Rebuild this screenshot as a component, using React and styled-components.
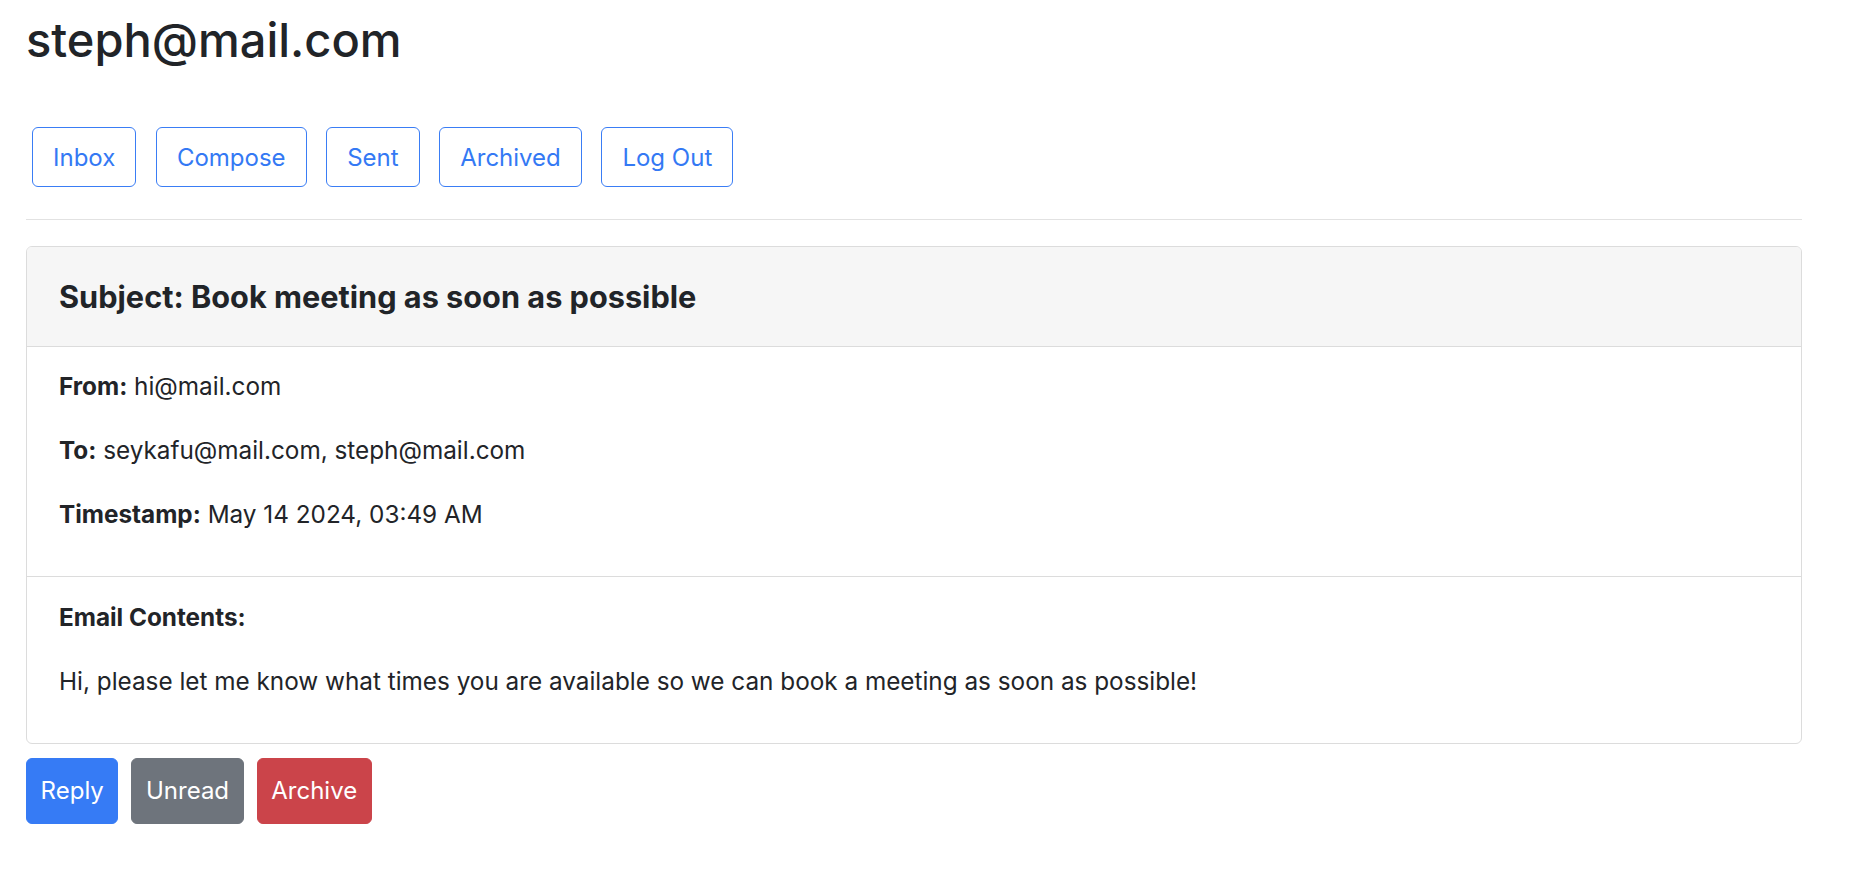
import React from "react";
import styled, { createGlobalStyle } from "styled-components";

const GlobalStyle = createGlobalStyle`
  html, body {
    margin: 0;
    padding: 0;
    background: #ffffff;
  }
  body {
    font-family: Inter, "Liberation Sans", Arial, sans-serif;
    color: #222428;
    -webkit-font-smoothing: antialiased;
  }
  * { box-sizing: border-box; }
`;

const Page = styled.div`
  width: 1802px;
  padding: 11px 0 40px 26px;
  display: flex;
  flex-direction: column;
`;

const Title = styled.h2`
  margin: 0;
  font-size: 47px;
  font-weight: 500;
  line-height: 57.6px;
  color: #212428;
`;

const Nav = styled.nav`
  display: flex;
  gap: 19.6px;
  padding-left: 6px;
  margin-top: 58.7px;
`;

const NavButton = styled.button`
  font-family: inherit;
  font-size: 24px;
  line-height: 36px;
  padding: 12px 20px 9.4px;
  border: 1px solid #3a7df5;
  border-radius: 6px;
  background: #ffffff;
  color: #3479f4;
  cursor: pointer;
`;

const Rule = styled.hr`
  margin: 32.3px 0 0;
  border: 0;
  border-top: 1px solid #e2e2e2;
  height: 0;
`;

const Card = styled.section`
  margin-top: 26px;
  border: 1px solid #dcdcdc;
  border-radius: 6px;
  overflow: hidden;
  background: #fff;
`;

const CardHeader = styled.header`
  background: #f6f6f6;
  border-bottom: 1px solid #dcdcdc;
  padding: 32.4px 32px 30.6px;
`;

const Subject = styled.h5`
  margin: 0;
  font-size: 30.7px;
  font-weight: 700;
  line-height: 36px;
  color: #212428;
`;

const CardSection = styled.div`
  padding: 21.3px 32px 16px;
  border-top: ${(p) => (p.$divided ? "1px solid #dcdcdc" : "0")};
`;

const Line = styled.p`
  margin: 0 0 28px;
  font-size: 24.3px;
  line-height: 36px;
`;

const Label = styled.strong`
  font-weight: 700;
`;

const Actions = styled.div`
  display: flex;
  gap: 13px;
  margin-top: 14px;
`;

const tones = {
  primary: "#367bf5",
  secondary: "#6e747c",
  danger: "#cb444a",
};

const ActionButton = styled.button`
  font-family: inherit;
  font-size: 24px;
  line-height: 36px;
  padding: 14px 13.6px;
  border: 1px solid ${(p) => tones[p.$tone]};
  border-radius: 6px;
  background: ${(p) => tones[p.$tone]};
  color: #ffffff;
  cursor: pointer;
`;

export default function App() {
  return (
    <>
      <GlobalStyle />
      <Page>
        <Title>steph@mail.com</Title>
        <Nav>
          <NavButton>Inbox</NavButton>
          <NavButton>Compose</NavButton>
          <NavButton>Sent</NavButton>
          <NavButton>Archived</NavButton>
          <NavButton>Log Out</NavButton>
        </Nav>
        <Rule />
        <Card>
          <CardHeader>
            <Subject>Subject: Book meeting as soon as possible</Subject>
          </CardHeader>
          <CardSection>
            <Line>
              <Label>From:</Label> hi@mail.com
            </Line>
            <Line>
              <Label>To:</Label> seykafu@mail.com, steph@mail.com
            </Line>
            <Line>
              <Label>Timestamp:</Label> May 14 2024, 03:49 AM
            </Line>
          </CardSection>
          <CardSection $divided>
            <Line>
              <Label>Email Contents:</Label>
            </Line>
            <Line>
              Hi, please let me know what times you are available so we can book a meeting as soon as possible!
            </Line>
          </CardSection>
        </Card>
        <Actions>
          <ActionButton $tone="primary">Reply</ActionButton>
          <ActionButton $tone="secondary">Unread</ActionButton>
          <ActionButton $tone="danger">Archive</ActionButton>
        </Actions>
      </Page>
    </>
  );
}
